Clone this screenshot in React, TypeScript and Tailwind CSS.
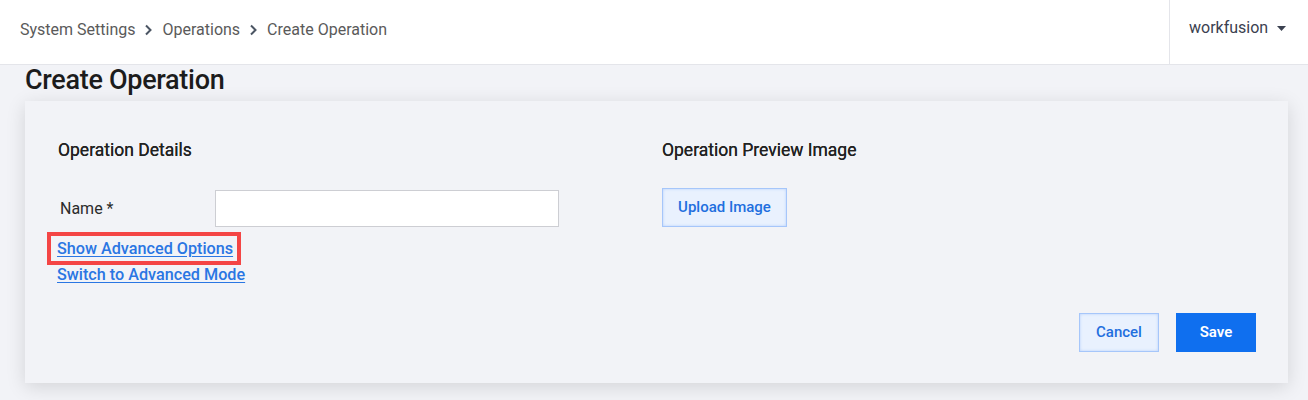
import type { FC } from "react";

const Chevron: FC = () => (
  <svg width="9" height="12" viewBox="0 0 9 12" className="mx-[9px] shrink-0">
    <path d="M2 1.5 L6.5 6 L2 10.5" fill="none" stroke="#4b5563" strokeWidth="2" />
  </svg>
);

const crumbs = ["System Settings", "Operations", "Create Operation"];

const App: FC = () => {
  return (
    <div className="min-h-[400px] bg-[#f2f3f7] font-['Roboto',sans-serif]">
      <header className="flex h-[65px] items-stretch border-b border-[#e4e5ea] bg-white">
        <nav className="flex flex-1 items-center pl-[20px] pb-[5px] text-[16px] text-[#5a5a5a]">
          {crumbs.map((c, i) => (
            <span key={c} className="flex items-center">
              {i > 0 && <Chevron />}
              {c}
            </span>
          ))}
        </nav>
        <div className="flex w-[139px] items-center border-l border-[#e4e5ea] pl-[19px] pb-[8px] text-[16px] text-[#3b4150]">
          workfusion
          <svg width="9" height="5" viewBox="0 0 9 5" className="ml-[9px]">
            <path d="M0 0 H9 L4.5 5 Z" fill="#3b4150" />
          </svg>
        </div>
      </header>

      <div className="px-[25px] pr-[20px]">
        <h1 className="text-[27px] font-medium leading-[30px] tracking-[-0.3px] text-[#1c1c1c]">
          Create Operation
        </h1>

        <section className="mt-[6px] w-[1263px] bg-[#f2f3f7] pl-[33px] pr-[32px] pt-[37px] pb-[31px] shadow-[0_4px_18px_rgba(0,0,0,0.13)]">
          <div className="grid grid-cols-[604px_1fr]">
            <div>
              <h2 className="text-[17.5px] font-normal leading-[24px] text-[#222] [text-shadow:0_0_0.3px_#222]">
                Operation Details
              </h2>
              <div className="mt-[28px] flex items-center">
                <label className="w-[157px] pl-[2px] text-[16px] text-[#2b2b2b]">Name *</label>
                <input className="h-[37px] w-[344px] border border-[#cdced3] bg-white px-2 outline-none" />
              </div>
              <div className="-ml-[11px] mt-[5px] inline-block border-[4px] border-[#f44545] pl-[6px] pr-[4px] py-[2px]">
                <a className="block text-[16.2px] font-medium leading-[21px] text-[#2a76e3] underline underline-offset-2" href="#">
                  Show Advanced Options
                </a>
              </div>
              <div className="-ml-[1px] -mt-[2px]">
                <a className="text-[16.2px] font-medium leading-[20px] text-[#2a76e3] underline underline-offset-2" href="#">
                  Switch to Advanced Mode
                </a>
              </div>
            </div>
            <div>
              <h2 className="text-[17.5px] font-normal leading-[24px] text-[#222] [text-shadow:0_0_0.3px_#222]">
                Operation Preview Image
              </h2>
              <button className="mt-[26px] h-[39px] w-[125px] border border-[#a6c6fa] bg-[#e9f1fe] text-[15px] font-medium text-[#1f6fde] shadow-[inset_0_0_3px_#b6d0fb]">
                Upload Image
              </button>
            </div>
          </div>

          <div className="mt-[26px] flex justify-end gap-[17px]">
            <button className="h-[39px] w-[80px] border border-[#a6c6fa] bg-[#e9f1fe] text-[15px] font-medium text-[#1f6fde] shadow-[inset_0_0_3px_#b6d0fb]">
              Cancel
            </button>
            <button className="h-[39px] w-[80px] bg-[#0f6fef] text-[15px] font-semibold text-white">
              Save
            </button>
          </div>
        </section>
      </div>
    </div>
  );
};

export default App;
